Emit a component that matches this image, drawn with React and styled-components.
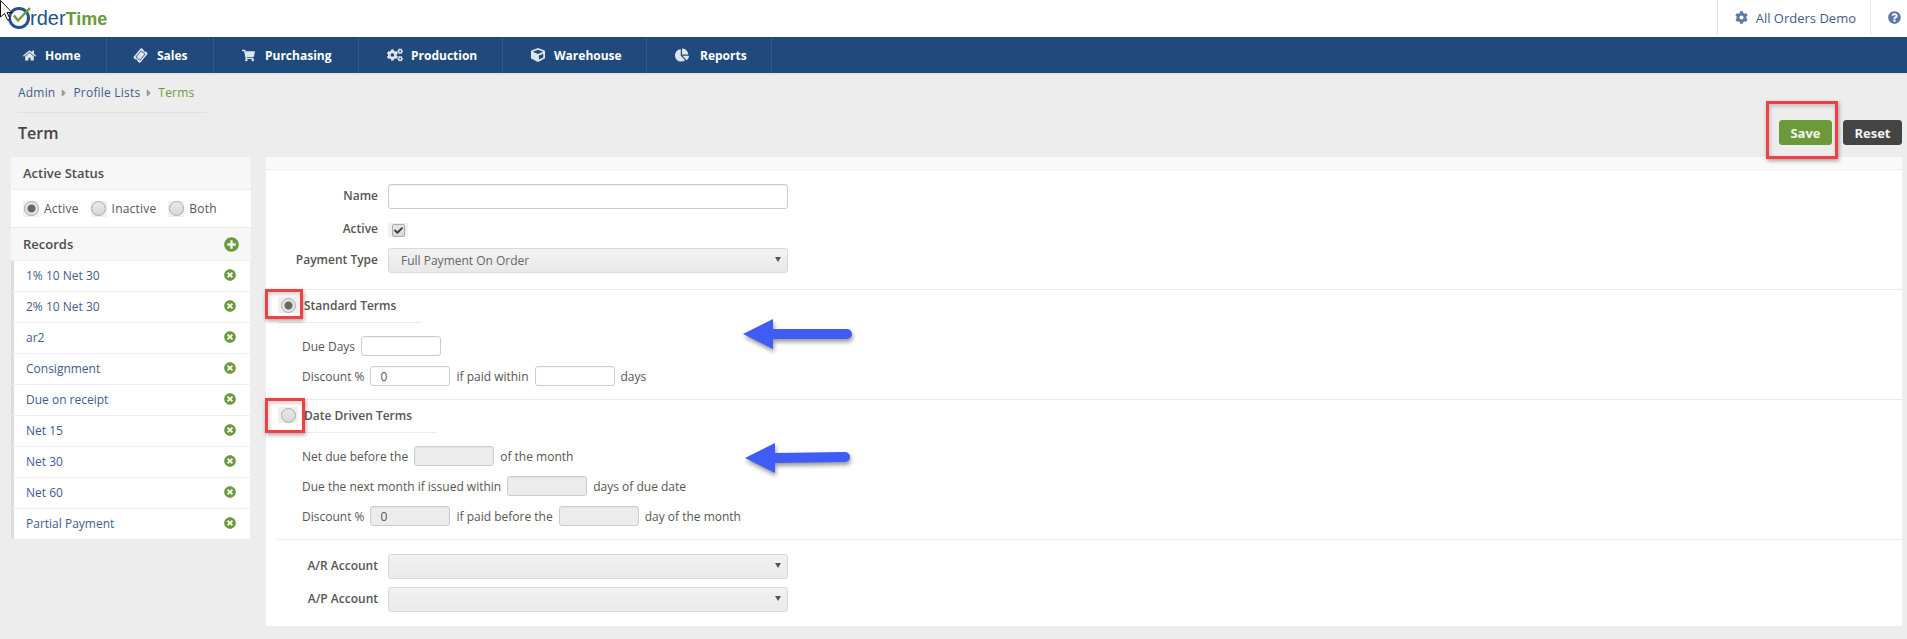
import React from "react";
import styled, { createGlobalStyle } from "styled-components";
import { FaHome, FaTicketAlt, FaShoppingCart, FaCogs, FaCube, FaChartPie, FaCog, FaQuestionCircle, FaPlusCircle, FaTimesCircle, FaCheck, FaCaretRight } from "react-icons/fa";

const GREEN = "#6a9a3a";
const NAVY = "#204a7c";
const LINK = "#3f5c8e";

const Global = createGlobalStyle`
  html, body { margin: 0; padding: 0; background: #ededed; height: 639px; overflow: hidden; }
  body { font-family: "Open Sans", "Liberation Sans", sans-serif; font-size: 12px; color: #555; }
  * { box-sizing: border-box; }
`;

const Page = styled.div`position: relative; width: 1907px; height: 639px; overflow: hidden;`;
const Header = styled.header`height: 37px; background: #fff; display: flex; align-items: stretch; justify-content: space-between;`;
const Logo = styled.div`display: flex; align-items: center; padding: 0 0 1px 7px;`;
const LogoText = styled.span`font-family: "Liberation Sans", sans-serif; font-size: 20px; color: #24528a; margin-left: -1px; line-height: 1;`;
const LogoTime = styled.b`font-size: 18px; color: ${GREEN};`;
const Account = styled.div`display: flex; align-items: center; height: 35px; color: ${LINK};`;
const AccountName = styled.div`
  display: flex; align-items: center; gap: 8px; height: 35px; padding: 0 14px 0 17px; font-size: 13px;
  border-left: 1px solid #e4e4e4; border-right: 1px solid #e4e4e4; color: ${LINK};
  svg { color: #5b78a6; font-size: 13px; }
`;
const Help = styled.div`width: 36px; display: flex; justify-content: center; padding-left: 10px; svg { color: #5b78a6; font-size: 13px; }`;
const Nav = styled.nav`height: 36px; background: ${NAVY}; display: flex; box-shadow: 0 1px 2px rgba(0,0,0,.08);`;
const NavItem = styled.div`
  width: ${p => p.$w}px; padding-left: ${p => p.$pl}px; display: flex; align-items: center; gap: ${p => p.$gap}px;
  border-right: 1px solid #325b8c; color: #fff; font-weight: 700; font-size: 12px; white-space: nowrap;
  svg { color: #dfe5ee; width: ${p => p.$icon}px; height: ${p => p.$icon}px; flex: none; transform: rotate(${p => p.$rot || 0}deg); }
`;
const Crumbs = styled.div`
  height: 40px; width: 189px; margin-left: 18px; border-bottom: 1px solid #e2e2e2; display: flex; align-items: center; gap: 3px;
  color: ${LINK}; font-size: 12px; letter-spacing: .2px; white-space: nowrap;
  svg { color: #999; font-size: 12px; }
`;
const Current = styled.span`color: ${GREEN};`;
const TitleBar = styled.div`height: 44px; padding: 7px 5px 0 18px; display: flex; justify-content: space-between; align-items: flex-start;`;
const Title = styled.h1`margin: 1px 0 0; font-size: 16px; line-height: 25px; font-weight: 600; color: #444;`;
const Buttons = styled.div`display: flex; gap: 11px;`;
const Btn = styled.button`
  height: 25px; width: ${p => p.$w}px; padding: 0; border: 1px solid ${p => p.$bg}; border-radius: 3px; background: ${p => p.$bg};
  color: #f4f4f4; font: 700 13px "Open Sans", sans-serif;
`;
const Columns = styled.div`display: flex; gap: 15px; padding: 0 5px 0 11px;`;
const Side = styled.aside`width: 240px; flex: none;`;
const SideHead = styled.div`
  height: ${p => p.$h}px; background: #f7f7f7; border-bottom: 1px solid #eee; padding: 0 11px 0 12px; display: flex; align-items: center;
  justify-content: space-between; font-size: 13px; font-weight: 600; color: #4c4c4c;
  svg { color: ${GREEN}; font-size: 15px; margin-right: 1px; }
`;
const StatusRow = styled.div`height: 38px; background: #fff; border-bottom: 1px solid #e9e9e9; display: flex; align-items: center; padding-left: 12px; font-size: 12px; letter-spacing: .2px;`;
const StatusOption = styled.label`display: flex; align-items: center; gap: 5px; margin-right: 12px;`;
const RadioBox = styled.span`
  width: ${p => p.$w || 16}px; height: 16px; flex: none; background: #f0f0f0; display: flex; align-items: center; justify-content: center;
`;
const RadioDot = styled.span`
  width: 15px; height: 15px; border-radius: 50%; border: 1px solid #aaa; background: ${p => p.$on ? "radial-gradient(circle, #666 0 3.5px, #e4e4e4 4.5px)" : "linear-gradient(#e8e8e8, #d8d8d8)"};
`;
const Rows = styled.ul`list-style: none; margin: 0; padding: 0; width: 239px;`;
const Row = styled.li`
  height: 31px; background: #fff; border-left: 3px solid #ddd; border-bottom: 1px solid #eee; padding: 0 14px 2px 12px; display: flex; align-items: center;
  justify-content: space-between; color: ${LINK}; font-size: 12px;
  &:last-child { border-bottom: 0; height: 30px; }
  svg { color: ${GREEN}; font-size: 12px; }
`;
const Main = styled.main`flex: 1; height: 469px; background: #fff;`;
const Strip = styled.div`height: 13px; background: #f9f9f9; border-bottom: 1px solid #eee;`;
const Block = styled.section`padding: ${p => p.$pt || 0}px 0 ${p => p.$pb || 0}px; margin-left: ${p => p.$ml || 0}px; border-bottom: ${p => p.$rule ? "1px solid #e9e9e9" : "0"};`;
const Field = styled.div`display: grid; grid-template-columns: 112px 400px; column-gap: 10px; align-items: center; margin-top: ${p => p.$mt || 0}px;`;
const Label = styled.label`text-align: right; font-weight: 600; color: #555; font-size: 12px; line-height: 12px; margin-bottom: 2px;`;
const TextInput = styled.input`
  height: ${p => p.$h || 20}px; width: ${p => p.$w || 80}px; border: 1px solid #ccc; border-radius: 3px; background: ${p => p.$off ? "#ececec" : "#fff"};
  padding: 0 9px; font: 12px "Open Sans", sans-serif; color: #555; outline: 0; box-shadow: inset 0 1px 1px rgba(0,0,0,.04);
`;
const CheckWrap = styled.span`width: 20px; height: 14px; background: #f1f1f1; display: flex; align-items: center; justify-content: center;`;
const Check = styled.span`
  width: 13px; height: 13px; border: 1px solid #aaa; border-radius: 2px; background: linear-gradient(#e8e8e8, #d8d8d8); display: flex; align-items: center; justify-content: center;
  svg { font-size: 9px; color: #333; }
`;
const Select = styled.div`
  position: relative; height: 25px; width: 400px; border: 1px solid #d9d9d9; border-radius: 3px; background: linear-gradient(#f2f2f2, #e9e9e9);
  display: flex; align-items: center; padding-left: 12px; color: #666; font-size: 12px;
  &::after { content: ""; position: absolute; right: 6px; top: 8px; border: 3px solid transparent; border-top: 5px solid #555; border-bottom: 0; }
`;
const TermHead = styled.div`
  display: inline-flex; align-items: center; gap: 6px; height: 33px; padding: 0 25px 2px 0; border-bottom: 1px solid #eaeaea; font-weight: 600; font-size: 12px; color: #555;
`;
const HeadWrap = styled.div`margin-left: 1px; display: flex;`;
const Line = styled.div`display: flex; align-items: center; gap: 6px; height: 20px; margin: ${p => p.$first ? 13 : 10}px 0 0 25px; font-size: 12px; white-space: nowrap;`;
const Overlay = styled.div`
  position: absolute; left: ${p => p.$x}px; top: ${p => p.$y}px; width: ${p => p.$w}px; height: ${p => p.$h}px;
  border: 3px solid #f04046; box-shadow: 1px 2px 4px rgba(0,0,0,.35), inset 1px 2px 4px rgba(0,0,0,.2); pointer-events: none;
`;
const Drawing = styled.svg`position: absolute; left: ${p => p.$x}px; top: ${p => p.$y}px; overflow: visible; pointer-events: none;`;

const Radio = ({ on, w }) => <RadioBox $w={w}><RadioDot $on={on} /></RadioBox>;

const records = ["1% 10 Net 30", "2% 10 Net 30", "ar2", "Consignment", "Due on receipt", "Net 15", "Net 30", "Net 60", "Partial Payment"];
const navs = [
  { t: "Home", I: FaHome, w: 107, pl: 23, gap: 9, icon: 13 },
  { t: "Sales", I: FaTicketAlt, w: 107, pl: 27, gap: 10, icon: 13, rot: -50 },
  { t: "Purchasing", I: FaShoppingCart, w: 145, pl: 28, gap: 10, icon: 13 },
  { t: "Production", I: FaCogs, w: 144, pl: 28, gap: 8, icon: 16 },
  { t: "Warehouse", I: FaCube, w: 144, pl: 28, gap: 9, icon: 14 },
  { t: "Reports", I: FaChartPie, w: 125, pl: 28, gap: 11, icon: 14 },
];

export default function App() {
  return (
    <Page>
      <Global />
      <Header>
        <Logo>
          <svg width="24" height="24" viewBox="0 0 24 24">
            <circle cx="12" cy="12" r="9.5" fill="none" stroke="#24528a" strokeWidth="3" />
            <path d="M7 9.5l4 5L23 2" fill="none" stroke={GREEN} strokeWidth="2.4" />
          </svg>
          <LogoText>rder<LogoTime>Time</LogoTime></LogoText>
        </Logo>
        <Account>
          <AccountName><FaCog />All Orders Demo</AccountName>
          <Help><FaQuestionCircle /></Help>
        </Account>
      </Header>
      <Nav>
        {navs.map(({ t, I, w, pl, gap, icon, rot }) => (
          <NavItem key={t} $w={w} $pl={pl} $gap={gap} $icon={icon} $rot={rot}><I />{t}</NavItem>
        ))}
      </Nav>
      <Crumbs>Admin<FaCaretRight />Profile Lists<FaCaretRight /><Current>Terms</Current></Crumbs>
      <TitleBar>
        <Title>Term</Title>
        <Buttons>
          <Btn $w={53} $bg={GREEN}>Save</Btn>
          <Btn $w={59} $bg="#444">Reset</Btn>
        </Buttons>
      </TitleBar>
      <Columns>
        <Side>
          <SideHead $h={33}>Active Status</SideHead>
          <StatusRow>
            <StatusOption><Radio on />Active</StatusOption>
            <StatusOption><Radio />Inactive</StatusOption>
            <StatusOption><Radio />Both</StatusOption>
          </StatusRow>
          <SideHead $h={33}>Records<FaPlusCircle /></SideHead>
          <Rows>
            {records.map(r => <Row key={r}>{r}<FaTimesCircle /></Row>)}
          </Rows>
        </Side>
        <Main>
          <Strip />
          <Block $pt={14} $pb={16} $rule>
            <Field><Label>Name</Label><TextInput $w={400} $h={25} /></Field>
            <Field $mt={14}><Label>Active</Label><CheckWrap><Check><FaCheck /></Check></CheckWrap></Field>
            <Field $mt={11}><Label>Payment Type</Label><Select>Full Payment On Order</Select></Field>
          </Block>
          <Block $pb={13} $ml={11} $rule>
            <HeadWrap><TermHead><Radio on w={20} />Standard Terms</TermHead></HeadWrap>
            <Line $first>Due Days<TextInput /></Line>
            <Line>Discount %<TextInput defaultValue="0" />if paid within<TextInput />days</Line>
          </Block>
          <Block $pb={13} $ml={11} $rule>
            <HeadWrap><TermHead><Radio w={20} />Date Driven Terms</TermHead></HeadWrap>
            <Line $first>Net due before the<TextInput $off />of the month</Line>
            <Line>Due the next month if issued within<TextInput $off />days of due date</Line>
            <Line>Discount %<TextInput $off defaultValue="0" />if paid before the<TextInput $off />day of the month</Line>
          </Block>
          <Block $pt={14}>
            <Field><Label>A/R Account</Label><Select /></Field>
            <Field $mt={8}><Label>A/P Account</Label><Select /></Field>
          </Block>
        </Main>
      </Columns>

      <Overlay $x={1766} $y={101} $w={72} $h={58} />
      <Overlay $x={265} $y={289} $w={38} $h={30} />
      <Overlay $x={265} $y={398} $w={40} $h={35} />
      <Drawing $x={743} $y={319} width="110" height="31" style={{ filter: "drop-shadow(1px 3px 2px rgba(0,0,0,.4))" }}>
        <path d="M0 15 L30 0 V10 H104 a5 5 0 0 1 0 10 H30 V30 Z" fill="#3f5cf5" />
      </Drawing>
      <Drawing $x={745} $y={443} width="106" height="31" style={{ filter: "drop-shadow(1px 3px 2px rgba(0,0,0,.4))" }}>
        <path d="M0 15 L30 0 V10 L100 9 a5 5 0 0 1 0 10 L30 20 V30 Z" fill="#3f5cf5" />
      </Drawing>
      <Drawing $x={0} $y={0} width="14" height="22">
        <path d="M.5 .5 V17 L4.5 13.5 L7.5 20 L10 19 L7 12.5 H12 Z" fill="#fff" stroke="#111" strokeWidth="1" />
      </Drawing>
    </Page>
  );
}
